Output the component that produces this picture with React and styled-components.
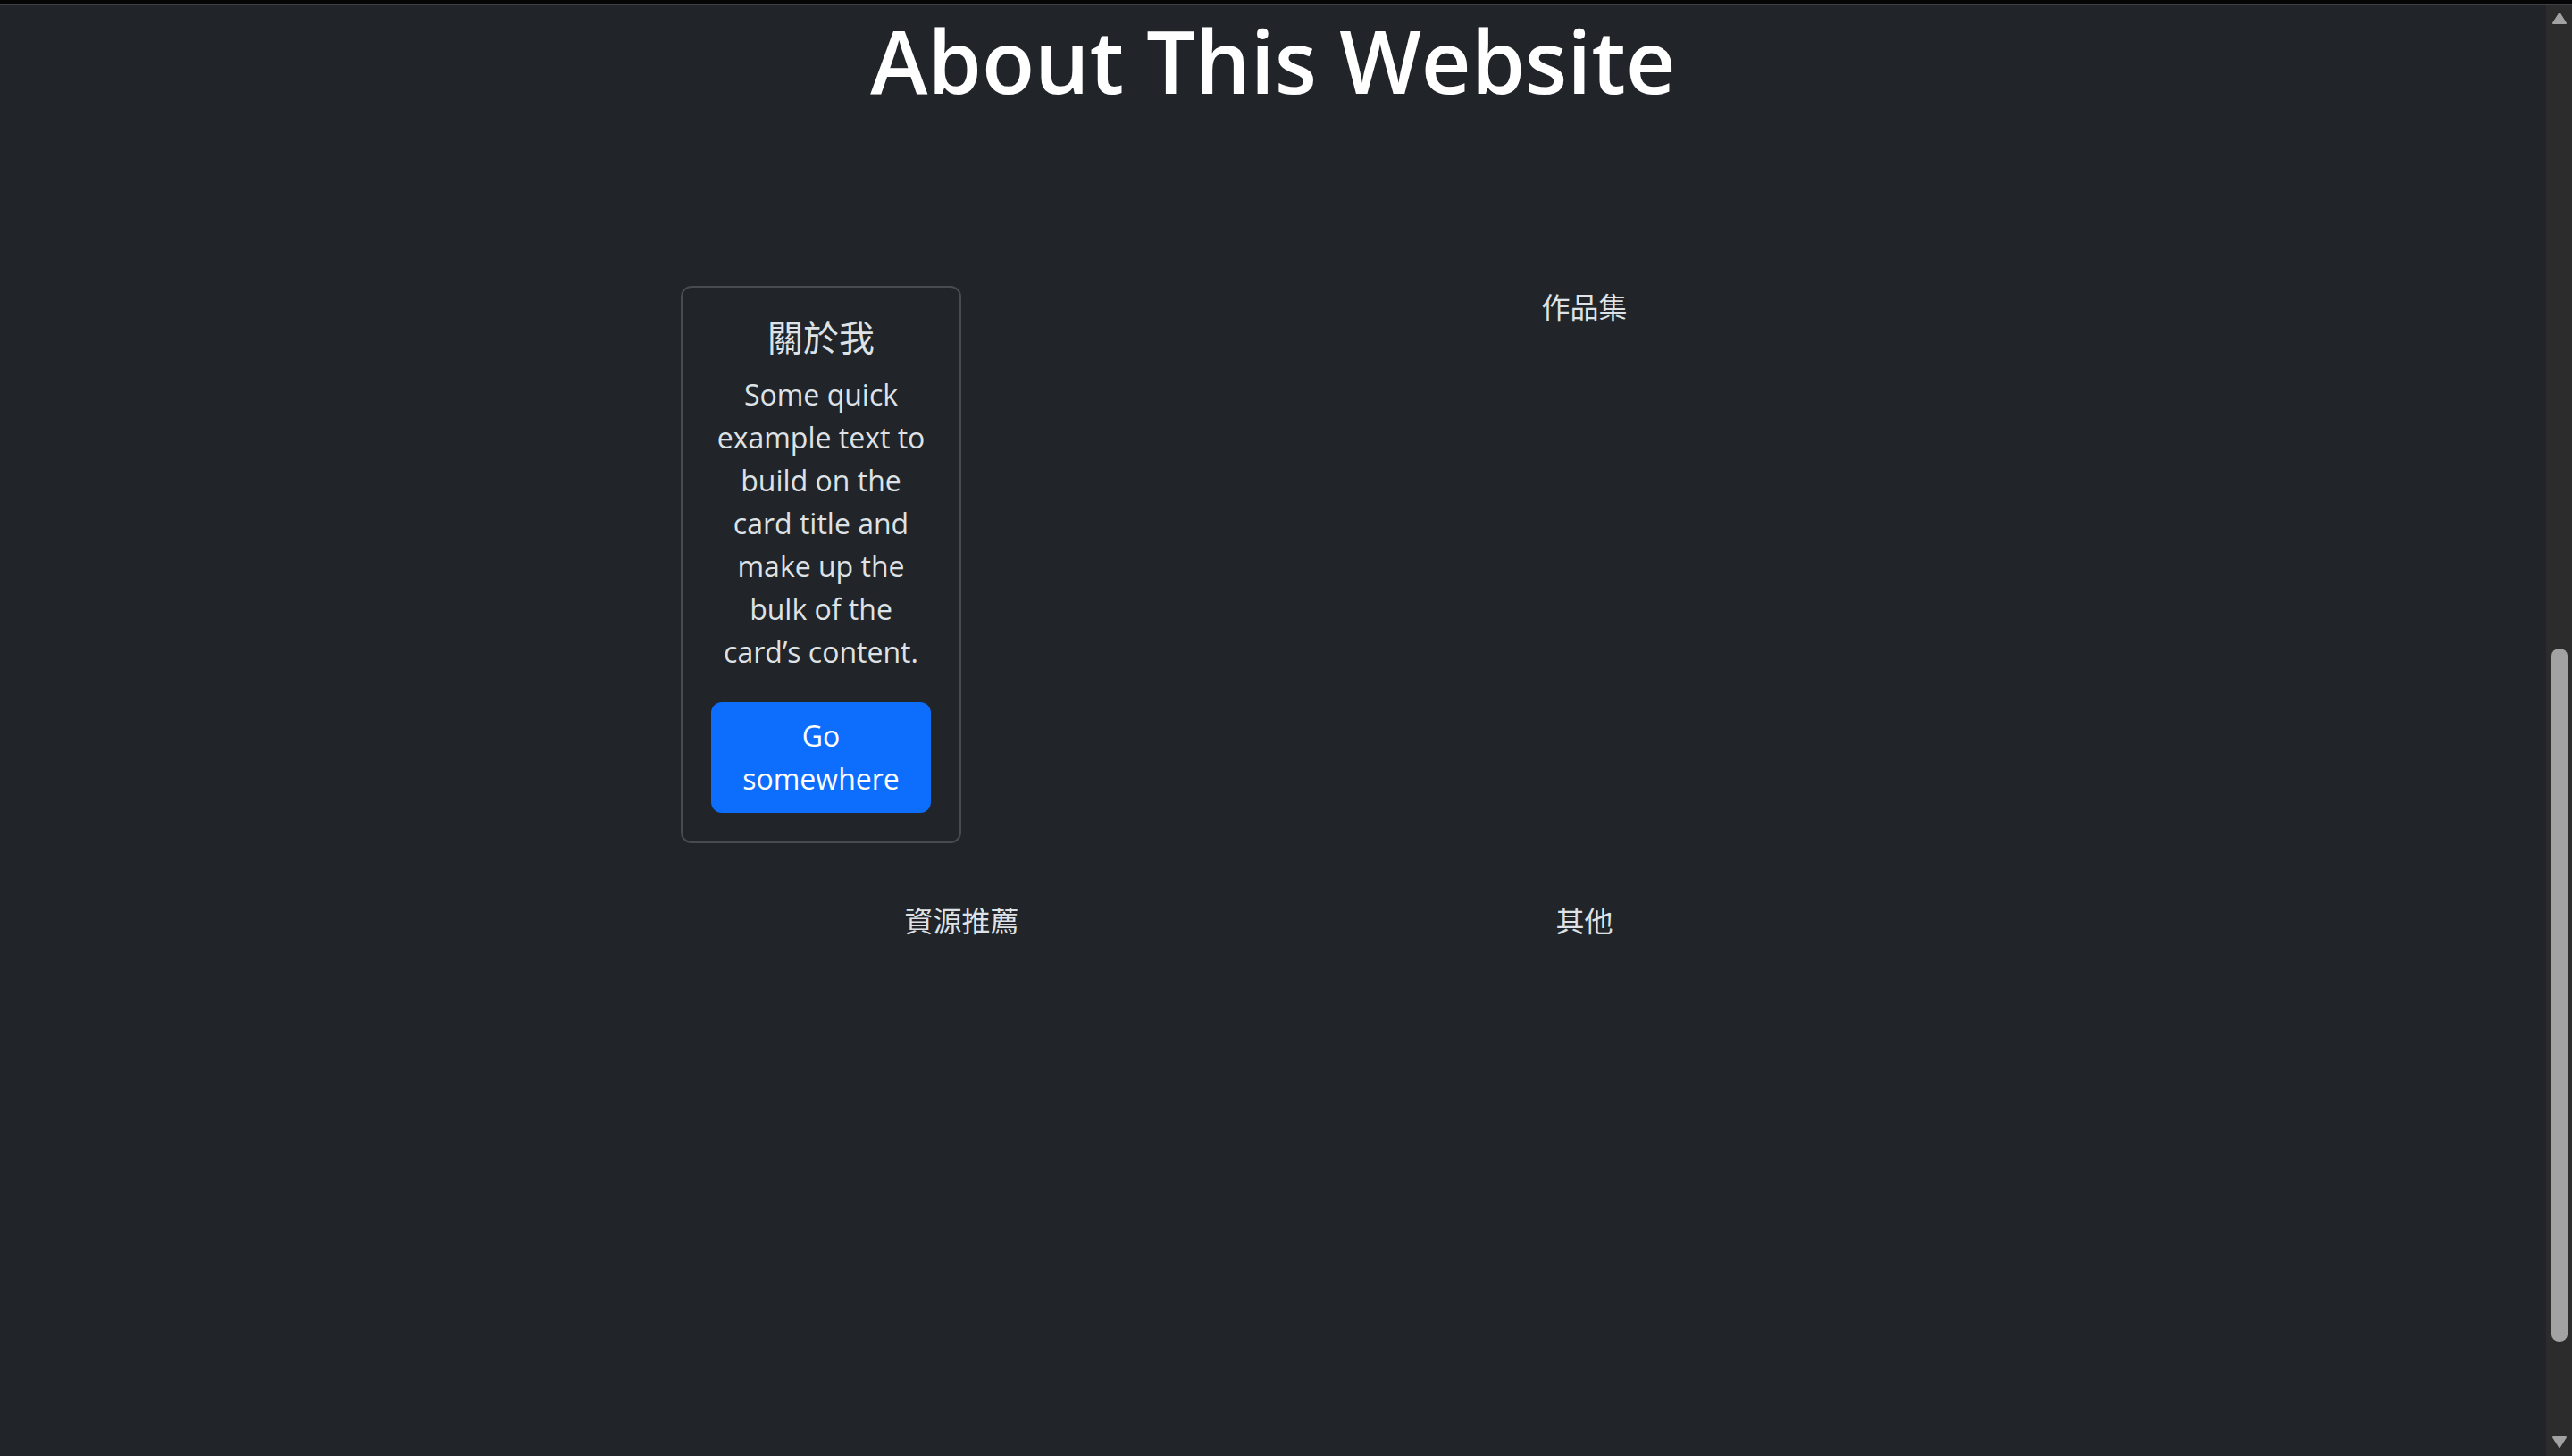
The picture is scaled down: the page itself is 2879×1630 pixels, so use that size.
import React from "react";
import styled, { createGlobalStyle } from "styled-components";

const colors = {
  page: "#212529",
  text: "#dee2e6",
  border: "#484c50",
  primary: "#0d6efd",
  track: "#2c2c2c",
  thumb: "#a2a2a2",
};

const GlobalStyle = createGlobalStyle`
  html, body, #root {
    margin: 0;
    height: 100%;
    overflow: hidden;
    background: ${colors.page};
  }
  body {
    font-family: "Open Sans", "Noto Sans CJK TC", sans-serif;
    color: ${colors.text};
  }
`;

const Frame = styled.div`
  display: flex;
  flex-direction: column;
  height: 100vh;
`;

const WindowEdge = styled.div`
  flex-shrink: 0;
  height: 5px;
  background: #050506;
  border-bottom: 1px solid #3d4045;
`;

const Viewport = styled.div`
  flex: 1;
  display: flex;
  min-height: 0;
`;

const Page = styled.main`
  flex: 1;
  background: ${colors.page};
`;

/* window scrollbar, page scrolled about halfway down */
const Scrollbar = styled.div`
  width: 29px;
  flex-shrink: 0;
  display: flex;
  flex-direction: column;
  background: ${colors.track};
`;

const ScrollButton = styled.div`
  height: 29px;
  flex-shrink: 0;
  display: flex;
  align-items: center;
  justify-content: center;
`;

const Track = styled.div`
  flex: 1;
  padding-top: ${(p) => p.$offset}px;
`;

const Thumb = styled.div`
  height: ${(p) => p.$size}px;
  margin: 0 5px 0 6px;
  border-radius: 9px / 8px;
  background: ${colors.thumb};
`;

const AboutSection = styled.section`
  padding-top: 0;
`;

const Heading = styled.h1`
  margin: 0;
  font-size: 97px;
  line-height: 122px;
  font-weight: 600;
  text-align: center;
  color: #fff;
`;

const SectionGrid = styled.div`
  width: 1394px;
  margin: 192px auto 0;
  display: grid;
  grid-template-columns: 1fr 1fr;
  row-gap: 63px;
`;

const Cell = styled.div`
  display: flex;
  align-items: flex-start;
  justify-content: ${(p) => (p.$start ? "flex-start" : "center")};
  padding-left: ${(p) => (p.$start ? "34px" : "0")};
`;

const Label = styled.span`
  font-size: 32px;
  line-height: 48px;
  color: ${colors.text};
`;

const Card = styled.div`
  width: 314px;
  box-sizing: border-box;
  border: 2px solid ${colors.border};
  border-radius: 12px;
  padding: 32px;
  text-align: center;
`;

const CardTitle = styled.h5`
  margin: 0 0 16px;
  font-size: 40px;
  line-height: 48px;
  font-weight: 400;
  color: ${colors.text};
`;

const CardText = styled.p`
  margin: 0 0 32px;
  font-size: 32px;
  line-height: 48px;
  color: ${colors.text};
`;

const Button = styled.a`
  display: block;
  box-sizing: border-box;
  width: 100%;
  padding: 12px 24px;
  border: 2px solid ${colors.primary};
  border-radius: 12px;
  background: ${colors.primary};
  color: #fff;
  font-size: 32px;
  line-height: 48px;
  text-decoration: none;
`;

const Arrow = ({ up }) => (
  <svg width="29" height="29" viewBox="0 0 29 29">
    <path
      d={up ? "M15 9 L22 20 L8 20 Z" : "M8 8 L22 8 L15 19 Z"}
      fill={colors.thumb}
      stroke={colors.thumb}
      strokeWidth="2"
      strokeLinejoin="round"
    />
  </svg>
);

const App = () => {
  return (
    <Frame>
      <GlobalStyle />
      <WindowEdge />
      <Viewport>
        <Page>
          <AboutSection>
            <Heading>About This Website</Heading>
            <SectionGrid>
              <Cell $start>
                <Card>
                  <CardTitle>關於我</CardTitle>
                  <CardText>
                    Some quick example text to build on the card title and make up the bulk of the card’s content.
                  </CardText>
                  <Button href="#">Go somewhere</Button>
                </Card>
              </Cell>
              <Cell>
                <Label>作品集</Label>
              </Cell>
              <Cell>
                <Label>資源推薦</Label>
              </Cell>
              <Cell>
                <Label>其他</Label>
              </Cell>
            </SectionGrid>
          </AboutSection>
        </Page>
        <Scrollbar>
          <ScrollButton>
            <Arrow up />
          </ScrollButton>
          <Track $offset={691}>
            <Thumb $size={776} />
          </Track>
          <ScrollButton>
            <Arrow />
          </ScrollButton>
        </Scrollbar>
      </Viewport>
    </Frame>
  );
};

export default App;
